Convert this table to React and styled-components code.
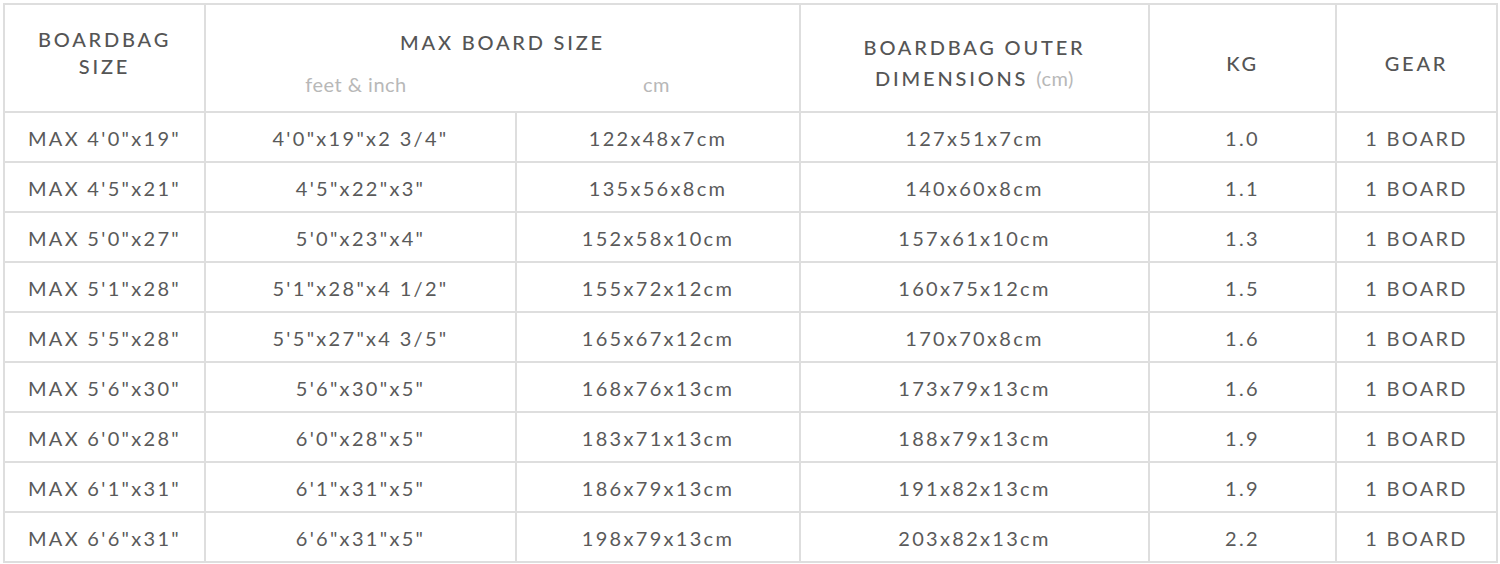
import React from 'react'
import styled, { createGlobalStyle } from 'styled-components'

const GlobalStyle = createGlobalStyle`
	body {
		margin: 0;
		background: #fff;
		font-family: 'Lato', 'Liberation Sans', sans-serif;
	}
`

const rows = [
	['MAX 4\'0"x19"', '4\'0"x19"x2 3/4"', '122x48x7cm', '127x51x7cm', '1.0'],
	['MAX 4\'5"x21"', '4\'5"x22"x3"', '135x56x8cm', '140x60x8cm', '1.1'],
	['MAX 5\'0"x27"', '5\'0"x23"x4"', '152x58x10cm', '157x61x10cm', '1.3'],
	['MAX 5\'1"x28"', '5\'1"x28"x4 1/2"', '155x72x12cm', '160x75x12cm', '1.5'],
	['MAX 5\'5"x28"', '5\'5"x27"x4 3/5"', '165x67x12cm', '170x70x8cm', '1.6'],
	['MAX 5\'6"x30"', '5\'6"x30"x5"', '168x76x13cm', '173x79x13cm', '1.6'],
	['MAX 6\'0"x28"', '6\'0"x28"x5"', '183x71x13cm', '188x79x13cm', '1.9'],
	['MAX 6\'1"x31"', '6\'1"x31"x5"', '186x79x13cm', '191x82x13cm', '1.9'],
	['MAX 6\'6"x31"', '6\'6"x31"x5"', '198x79x13cm', '203x82x13cm', '2.2'],
]

const App = () => {
	return (
		<Wrapper>
			<GlobalStyle />
			<SizeTable>
				<colgroup>
					<col style={{ width: 201 }} />
					<col style={{ width: 311 }} />
					<col style={{ width: 284 }} />
					<col style={{ width: 349 }} />
					<col style={{ width: 187 }} />
					<col style={{ width: 161 }} />
				</colgroup>
				<thead>
					<tr>
						<HeadCell $shift={-10}>
							BOARDBAG
							<br />
							SIZE
						</HeadCell>
						<HeadCell colSpan={2}>
							<HeadTitle>MAX BOARD SIZE</HeadTitle>
							<SubRow>
								<Sub>feet &amp; inch</Sub>
								<Sub>cm</Sub>
							</SubRow>
						</HeadCell>
						<HeadCell $shift={9} $lh={31}>
							BOARDBAG OUTER
							<br />
							DIMENSIONS <Unit>(cm)</Unit>
						</HeadCell>
						<HeadCell $shift={10}>KG</HeadCell>
						<HeadCell $shift={10}>GEAR</HeadCell>
					</tr>
				</thead>
				<tbody>
					{rows.map((row) => (
						<tr key={row[0]}>
							{row.map((value, i) => (
								<Cell key={i}>{value}</Cell>
							))}
							<Cell>1 BOARD</Cell>
						</tr>
					))}
				</tbody>
			</SizeTable>
		</Wrapper>
	)
}

export default App

const Wrapper = styled.div`
	padding: 3px 2px 0 3px;
`

const SizeTable = styled.table`
	width: 1495px;
	border-collapse: collapse;
	table-layout: fixed;
	color: #5a5a5a;

	th,
	td {
		border: 2px solid #dedede;
		text-align: center;
		vertical-align: middle;
		padding: 0;
	}
`

const HeadCell = styled.th`
	height: ${({ $shift = 0 }) => 106 - Math.abs($shift)}px;
	font-size: 20px;
	font-weight: 500;
	letter-spacing: 2.8px;
	line-height: ${({ $lh }) => $lh || 27}px;
	color: #555;

	&& {
		padding-top: ${({ $shift = 0 }) => Math.max($shift, 0)}px;
		padding-bottom: ${({ $shift = 0 }) => Math.max(-$shift, 0)}px;
	}
`

const HeadTitle = styled.div`
	padding-top: 10px;
`

const SubRow = styled.div`
	display: grid;
	grid-template-columns: 300px 301px;
	margin-top: 15px;
`

const Sub = styled.span`
	font-size: 20px;
	font-weight: 400;
	letter-spacing: 0.5px;
	color: #b8b8b8;
`

const Unit = styled.span`
	font-weight: 400;
	letter-spacing: 0.5px;
	color: #b8b8b8;
`

const Cell = styled.td`
	height: 46px;
	font-size: 20px;
	letter-spacing: 2.3px;

	&& {
		padding-top: 2px;
	}
`
